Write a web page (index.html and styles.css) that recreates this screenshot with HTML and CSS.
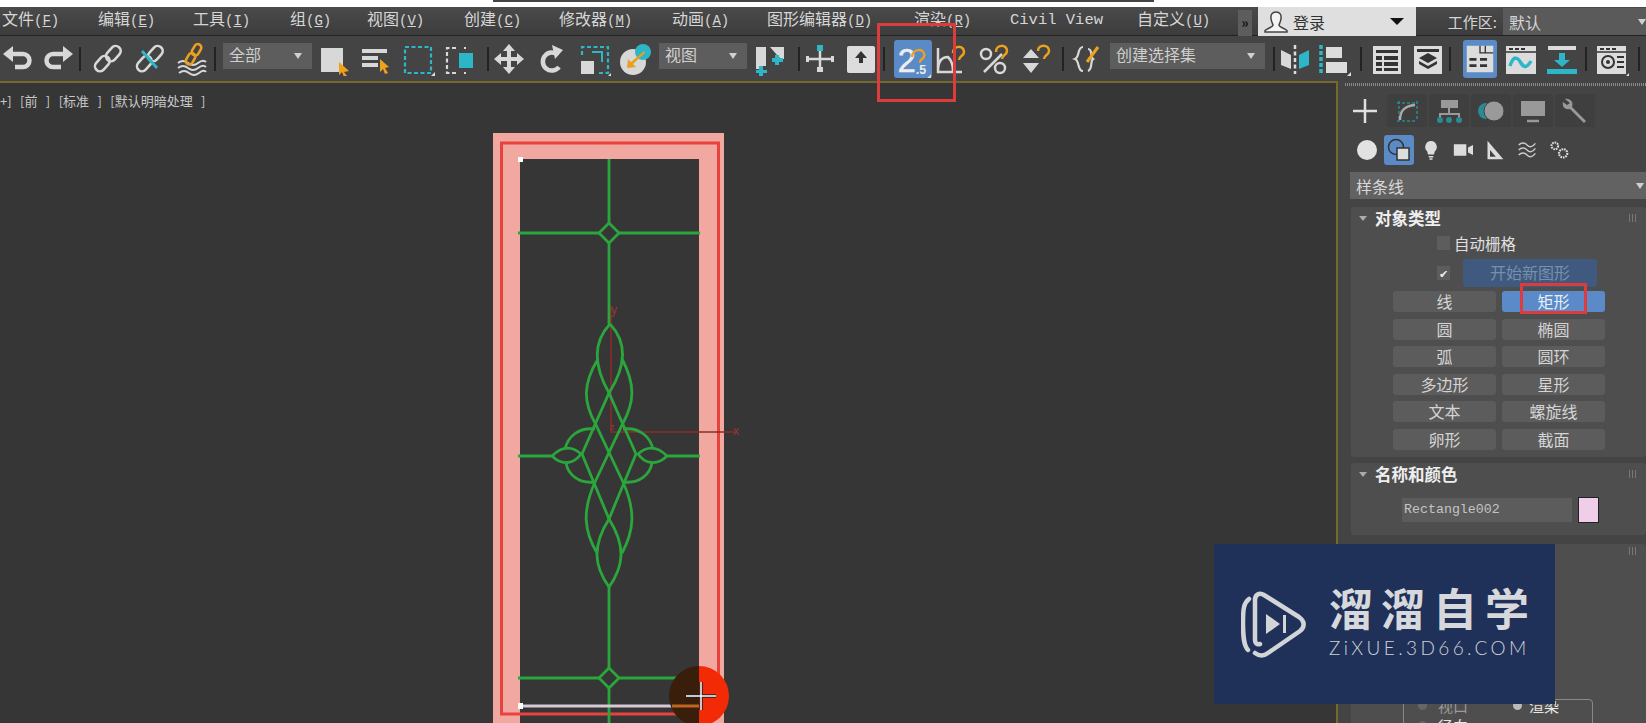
FILE: index.html
```html
<!DOCTYPE html>
<html lang="zh-CN">
<head>
<meta charset="utf-8">
<title>3ds Max</title>
<link rel="stylesheet" href="styles.css">
</head>
<body>
<div class="strip"><div class="strip-dark"></div></div>
<nav class="menu">
  <span>文件<i>(<u>F</u>)</i></span><span>编辑<i>(<u>E</u>)</i></span><span>工具<i>(<u>I</u>)</i></span><span>组<i>(<u>G</u>)</i></span><span>视图<i>(<u>V</u>)</i></span><span>创建<i>(<u>C</u>)</i></span><span>修改器<i>(<u>M</u>)</i></span><span>动画<i>(<u>A</u>)</i></span><span>图形编辑器<i>(<u>D</u>)</i></span><span>渲染<i>(<u>R</u>)</i></span><span class="civil">Civil View</span><span>自定义<i>(<u>U</u>)</i></span>
  <b class="more">»</b>
  <div class="login">
    <svg class="user" viewBox="0 0 26 24"><path d="M13 2c-4 0-5.500 3-5 6.500.3 3 1.500 5 2 6.500 0 2-5 3-8 5.500v1.500h22V20.500c-3-2.500-8-3.500-8-5.500.5-1.500 1.700-3.500 2-6.500C18.500 5 17 2 13 2z" fill="#f4f4f4" stroke="#444" stroke-width="1.500"/></svg>
    <span>登录</span><em class="tri-black"></em>
  </div>
  <div class="ws-label">工作区:</div>
  <div class="ws-value">默认<em class="tri-small"></em></div>
</nav>
<div class="tools">
  <svg class="ic first" viewBox="0 0 34 34"><path d="M10 12h12a6.500 6.500 0 0 1 0 13h-8" fill="none" stroke="#d8d8d8" stroke-width="4.500"/><path d="M12 4L2 12l10 8z" fill="#d8d8d8"/></svg>
  <svg class="ic ml6" viewBox="0 0 34 34"><path d="M24 12H12a6.500 6.500 0 0 0 0 13h8" fill="none" stroke="#d8d8d8" stroke-width="4.500"/><path d="M22 4l10 8-10 8z" fill="#d8d8d8"/></svg>
  <span class="sep ml4"></span>
  <svg class="ic ml10" viewBox="0 0 34 34"><g fill="none" stroke="#d8d8d8" stroke-width="2.600"><rect x="3" y="17" width="17" height="10" rx="5" transform="rotate(-48 11 22)"/><rect x="14" y="7" width="17" height="10" rx="5" transform="rotate(-48 22 12)"/></g></svg>
  <svg class="ic ml8" viewBox="0 0 34 34"><g fill="none" stroke="#d8d8d8" stroke-width="2.600"><rect x="3" y="17" width="17" height="10" rx="5" transform="rotate(-48 11 22)"/><rect x="14" y="7" width="17" height="10" rx="5" transform="rotate(-48 22 12)"/></g><path d="M9 9l15 17" stroke="#2db5c8" stroke-width="3"/></svg>
  <svg class="ic ml8" viewBox="0 0 34 34"><path d="M3 21q5-4 10 0t10 0 8-1M3 26q5-4 10 0t10 0 8-1M4 31q5-4 10 0t10 0 7-1" fill="none" stroke="#d8d8d8" stroke-width="2"/><g fill="none" stroke="#e8a020" stroke-width="2.600"><rect x="10" y="13" width="12" height="7" rx="3.500" transform="rotate(-60 16 17)"/><rect x="16" y="4" width="12" height="7" rx="3.500" transform="rotate(-60 22 8)"/></g></svg>
  <span class="sep ml5"></span>
  <div class="combo ml7 w89"><span>全部</span><em class="tri-small"></em></div>
  <svg class="ic ml5" viewBox="0 0 34 34"><rect x="4" y="6" width="22" height="24" fill="#d8d8d8"/><path d="M22 20l10 9-5 1 3 4-3 1-2-5-3 3z" fill="#eea11c"/></svg>
  <svg class="ic ml7" viewBox="0 0 34 34"><path d="M4 7h25v4H4zM4 14h16v4H4zM4 21h16v4H4z" fill="#d8d8d8"/><path d="M22 17l9 8-4 1 3 5-3 1-2-5-3 3z" fill="#eea11c"/></svg>
  <svg class="ic ml9" viewBox="0 0 34 34"><rect x="4" y="5" width="26" height="26" fill="none" stroke="#2db5c8" stroke-width="2.200" stroke-dasharray="4 2.500"/><path d="M34 34h-4l4-4z" fill="#ddd"/></svg>
  <svg class="ic ml7" viewBox="0 0 34 34"><path d="M14 6H5v25h9M22 6h2M22 31h2" fill="none" stroke="#d8d8d8" stroke-width="2.200" stroke-dasharray="4 2.500"/><rect x="17" y="11" width="14" height="15" fill="#2db5c8"/></svg>
  <span class="sep ml11"></span>
  <svg class="ic ml3" viewBox="0 0 34 34"><path d="M17 2l6 7h-4v6h6v-4l7 6-7 6v-4h-6v6h4l-6 7-6-7h4v-6H9v4l-7-6 7-6v4h6V9h-4z" fill="#d8d8d8"/></svg>
  <svg class="ic ml9" viewBox="0 0 34 34"><path d="M23 13a9 9 0 1 0 1 12" fill="none" stroke="#d8d8d8" stroke-width="4.500"/><path d="M17 3l11 5-8 9z" fill="#d8d8d8"/></svg>
  <svg class="ic ml8" viewBox="0 0 34 34"><path d="M5 13V5h26v26h-9" fill="none" stroke="#2db5c8" stroke-width="2.200" stroke-dasharray="4 2.500"/><path d="M15 10h10v10" fill="none" stroke="#2db5c8" stroke-width="2"/><rect x="4" y="19" width="13" height="13" fill="#d8d8d8"/><path d="M34 34h-3l3-3z" fill="#ddd"/></svg>
  <svg class="ic ml7" viewBox="0 0 34 34"><circle cx="15" cy="20" r="13" fill="#d8d8d8"/><circle cx="25" cy="10" r="8" fill="#2db5c8"/><path d="M26 9L13 20l-3-3-1 9 9-1-3-3 12-11z" fill="#e8a020"/></svg>
  <div class="combo ml7 w88"><span>视图</span><em class="tri-small"></em></div>
  <svg class="ic ml7" viewBox="0 0 34 34"><path d="M2 5h10v19H6v3H2zM16 5h14v12h-3l-4-4z" fill="#d8d8d8"/><path d="M5 24h4v4h4v3H9v3H5v-3H2v-3h3zM21 13h4v3h4v4h-4v3h-4v-3h-3v-4h3z" fill="#2db5c8"/></svg>
  <span class="sep ml10"></span>
  <svg class="ic ml3" viewBox="0 0 34 34"><path d="M3 17h28M17 8v20" stroke="#d8d8d8" stroke-width="2.500"/><path d="M3 14h3v6H3zM28 14h3v6h-3zM14 25h6v5h-6z" fill="#d8d8d8"/><rect x="14" y="3" width="6" height="6" fill="#2db5c8"/></svg>
  <svg class="ic ml7" viewBox="0 0 34 34"><rect x="3" y="4" width="28" height="27" rx="2" fill="#dcdcdc"/><path d="M17 9l6 7h-4v5h-4v-5h-4z" fill="#333"/></svg>
  <span class="sep ml5"></span>
  <div class="snap ml9">
    <svg viewBox="0 0 38 40"><text x="3" y="34" class="snap-two">2</text><text x="22" y="36" class="snap-five">.5</text><path d="M18 18c0-9 13-10 13-2 0 4-5 4-5 8" fill="none" stroke="#eea11c" stroke-width="2.500"/><path d="M38 40h-4l4-4z" fill="#ddd"/></svg>
  </div>
  <svg class="ic ml3" viewBox="0 0 34 34"><path d="M3 6v24h24M3 29c0-10 4-14 10-14 3 3 5 8 5 14" fill="none" stroke="#d8d8d8" stroke-width="2.500"/><path d="M18 11c0-8 11-8 11-1 0 4-5 4-5 8" fill="none" stroke="#eea11c" stroke-width="2.500"/></svg>
  <svg class="ic ml9" viewBox="0 0 34 34"><circle cx="8" cy="12" r="5" fill="none" stroke="#d8d8d8" stroke-width="2.500"/><circle cx="22" cy="26" r="5" fill="none" stroke="#d8d8d8" stroke-width="2.500"/><path d="M6 30L24 12" stroke="#d8d8d8" stroke-width="2.500"/><path d="M18 10c0-8 11-8 11-1 0 4-5 4-5 8" fill="none" stroke="#eea11c" stroke-width="2.500"/></svg>
  <svg class="ic ml8" viewBox="0 0 34 34"><path d="M11 7l8 9H3zM11 31l8-10H3z" fill="#d8d8d8"/><path d="M18 9c0-7 11-7 11 0 0 4-5 4-5 8" fill="none" stroke="#eea11c" stroke-width="2.500"/></svg>
  <span class="sep ml8"></span>
  <svg class="ic ml7" viewBox="0 0 34 34"><path d="M12 5C6 5 9 15 4 17c5 2 2 12 8 12" fill="none" stroke="#d8d8d8" stroke-width="2.200"/><path d="M17 7c5 0 2 8 5 10-3 2 0 10-5 12" fill="none" stroke="#d8d8d8" stroke-width="2.200"/><path d="M16 20L27 5" stroke="#eea11c" stroke-width="3"/></svg>
  <div class="combo ml5 w155"><span>创建选择集</span><em class="tri-small"></em></div>
  <span class="sep ml8"></span>
  <svg class="ic ml3" viewBox="0 0 34 34"><path d="M3 8l10 5v14L3 23z" fill="#d8d8d8"/><path d="M31 8l-10 5v14l10-4z" fill="#2db5c8"/><path d="M17 3v29" stroke="#ddd" stroke-width="2.500" stroke-dasharray="4 2.500"/></svg>
  <svg class="ic ml5" viewBox="0 0 34 34"><path d="M4 3v30" stroke="#2db5c8" stroke-width="3.500" stroke-dasharray="4 2"/><path d="M9 5h16v11H9zM9 20h21v11H9z" fill="#dcdcdc"/><path d="M34 34h-4l4-4z" fill="#ddd"/></svg>
  <span class="sep ml9"></span>
  <svg class="ic ml8" viewBox="0 0 34 34"><rect x="3" y="4" width="28" height="28" fill="#dcdcdc"/><path d="M6 8h22v3H6zM6 14h6v4H6zM14 14h14v4H14zM6 20h6v4H6zM14 20h14v4H14zM6 26h6v3H6zM14 26h14v3H14z" fill="#333"/></svg>
  <svg class="ic ml7" viewBox="0 0 34 34"><rect x="3" y="4" width="28" height="28" fill="#dcdcdc"/><path d="M6 7h22v3H6zM17 11l9 5-9 5-9-5z" fill="#333"/><path d="M8 19l9 5 9-5v3l-9 5-9-5z" fill="#333"/></svg>
  <span class="sep ml4"></span>
  <div class="active-ic ml12"><svg viewBox="0 0 34 34"><rect x="2" y="2" width="30" height="30" fill="#dcdcdc"/><path d="M5 16h8v3H5zM17 16h8v3h-8zM5 23h8v3H5zM17 23h8v3h-8z" fill="#333"/><path d="M17 2v8h15M23 2v8" fill="none" stroke="#333" stroke-width="1.500"/></svg></div>
  <svg class="ic ml7" viewBox="0 0 34 34"><rect x="2" y="4" width="30" height="28" fill="#dcdcdc"/><path d="M2 10h30" stroke="#333" stroke-width="1.500"/><path d="M5 6h4v2H5zM11 6h4v2h-4zM17 6h4v2h-4z" fill="#333"/><path d="M6 24c4-12 8-8 11-3s6 5 10-2" fill="none" stroke="#2db5c8" stroke-width="3.500"/></svg>
  <svg class="ic ml7" viewBox="0 0 34 34"><path d="M3 4h28v4H3z" fill="#dcdcdc"/><path d="M14 11h6v7h5l-8 7-8-7h5z" fill="#2db5c8"/><path d="M2 27h30v5H2z" fill="#2db5c8"/></svg>
  <span class="sep ml6"></span>
  <svg class="ic ml8" viewBox="0 0 34 34"><rect x="2" y="4" width="29" height="28" fill="#dcdcdc"/><path d="M2 10h29" stroke="#333" stroke-width="1.500"/><path d="M5 6h4v2H5zM11 6h4v2h-4zM17 6h4v2h-4zM22 14h7v2h-7zM22 19h7v2h-7zM22 24h7v2h-7z" fill="#333"/><circle cx="13" cy="20" r="6" fill="none" stroke="#333" stroke-width="2"/><circle cx="13" cy="20" r="2" fill="#333"/><path d="M34 34h-3l3-3z" fill="#ddd"/></svg>
  <span class="sep ml9"></span>
</div>
<main class="main">
  <section class="viewport">
    <div class="vp-label">+] [前 ] [标准 ] [默认明暗处理 ]</div>
    <svg class="scene" viewBox="0 80 1336 643">
      <rect x="493" y="132" width="231" height="600" fill="#f0a8a0"/>
      <rect x="520" y="158" width="179" height="570" fill="#363636"/>
      <rect x="501.500" y="142" width="217" height="571" fill="none" stroke="#e8423e" stroke-width="3"/>
      <g fill="none" stroke="#8f2a2a" stroke-width="1.500">
        <path d="M611 305v126h124"/>
      </g>
      <text x="611" y="313" class="axis">y</text>
      <text x="733" y="434" class="axis">x</text>
      <text x="610" y="429" class="axis small">z</text>
      <g fill="none" stroke="#2ba63c" stroke-width="2.800">
        <path d="M609 158V222M609 242V323M609 586V667M609 687V723"/>
        <path d="M518 232H599M619 232H700M518 455H552M667 455H700M518 677H599M619 677H680"/>
        <path d="M609 222l10 10-10 10-10-10zM609 667l10 10-10 10-10-10z"/>
        <path d="M610 323C594 340 592 362 609 392L636 453"/>
        <path d="M610 323C626 340 628 362 609 392L582 453"/>
        <path d="M598 358C582 384 584 402 595 422L623 481C636 510 634 530 622 552"/>
        <path d="M622 358C636 384 634 402 623 422L595 481C582 510 584 530 597 552"/>
        <path d="M582 453L609 518C626 545 624 565 609 586"/>
        <path d="M636 453L609 518C592 545 594 565 609 586"/>
        <path d="M552 455C562 445 572 445 581 453C574 463 562 465 552 455z"/>
        <path d="M667 455C657 445 647 445 638 453C645 463 657 465 667 455z"/>
        <path d="M595 428C578 426 568 436 565 448M595 481C578 483 568 473 566 462"/>
        <path d="M623 428C640 426 650 436 653 448M623 481C640 483 650 473 652 462"/>
      </g>
      <path d="M520 705H672" stroke="#d8c8d8" stroke-width="3"/>
      <rect x="518" y="156" width="5" height="5" fill="#fff"/>
      <rect x="518" y="702" width="5" height="6" fill="#fff"/>
      <path d="M699 665A30 30 0 0 0 699 725z" fill="#3a1e0c"/>
      <path d="M699 665A30 30 0 0 1 699 725z" fill="#f32a06"/>
      <path d="M672 705H699" stroke="#c0651e" stroke-width="3"/>
      <path d="M686 695H716M701 681V709" stroke="#222" stroke-width="3.500"/>
      <path d="M686 695H716M701 681V709" stroke="#fff" stroke-width="1.500"/>
    </svg>
  </section>
  <aside class="panel">
    <div class="dots"></div>
    <div class="tabs">
      <div class="tab tab-on"><svg viewBox="0 0 30 30"><path d="M15 3v24M3 15h24" stroke="#e0e0e0" stroke-width="2.500"/></svg></div>
      <div class="tab"><svg viewBox="0 0 30 30"><path d="M5 7h20M5 25h20M7 5v20M25 5v20" stroke="#2b8a92" stroke-width="1.500" stroke-dasharray="3 2"/><path d="M8 24C8 14 13 10 23 9" fill="none" stroke="#aaa" stroke-width="2.500"/></svg></div>
      <div class="tab"><svg viewBox="0 0 30 30"><rect x="7" y="4" width="17" height="8" fill="#999"/><path d="M15 12v5M6 23v-5h19v5" fill="none" stroke="#999" stroke-width="2"/><circle cx="6" cy="24" r="3" fill="#2b8a92"/><circle cx="15" cy="24" r="3" fill="#2b8a92"/><circle cx="25" cy="24" r="3" fill="#2b8a92"/></svg></div>
      <div class="tab"><svg viewBox="0 0 30 30"><circle cx="10" cy="15" r="8" fill="#2b8a92"/><circle cx="18" cy="15" r="10" fill="#9a9a9a" stroke="#444"/></svg></div>
      <div class="tab"><svg viewBox="0 0 30 30"><rect x="3" y="5" width="24" height="15" fill="#999"/><path d="M9 25h12" stroke="#999" stroke-width="2.500"/></svg></div>
      <div class="tab"><svg viewBox="0 0 30 30"><path d="M5 3c5-1 9 3 7 8l14 14-2 2L10 13c-5 1-8-2-7-7l4 3 3-2z" fill="#999"/></svg></div>
    </div>
    <div class="subtabs">
      <svg class="sub" viewBox="0 0 30 30"><circle cx="15" cy="15" r="10" fill="#e2e2e2"/></svg>
      <div class="sub sub-on"><svg viewBox="0 0 30 30"><circle cx="12" cy="12" r="7.500" fill="none" stroke="#333" stroke-width="1.500"/><rect x="13" y="13" width="12" height="12" fill="#ddd" stroke="#333" stroke-width="1.500"/></svg></div>
      <svg class="sub" viewBox="-5 -5 40 40"><path d="M15 3a8 8 0 0 1 5 14l-1 4h-8l-1-4A8 8 0 0 1 15 3zM12 23h6v2h-6zM13 26h4v2h-4z" fill="#dcdcdc"/></svg>
      <svg class="sub" viewBox="-3 -3 36 36"><path d="M4 8h15v14H4zM21 12l6-3v12l-6-3z" fill="#dcdcdc"/></svg>
      <svg class="sub" viewBox="-3 -3 36 36"><path d="M6 4l19 22H6z" fill="#dcdcdc"/><path d="M9 15l7 8H9z" fill="#444"/></svg>
      <svg class="sub" viewBox="-3 -3 36 36"><path d="M5 9q5-5 10 0t10-2M5 15q5-5 10 0t10-2M5 21q5-5 10 0t10-2" fill="none" stroke="#ccc" stroke-width="1.700"/></svg>
      <svg class="sub" viewBox="-3 -3 36 36"><circle cx="10" cy="10" r="4" fill="none" stroke="#ddd" stroke-width="2.500" stroke-dasharray="2 1"/><circle cx="20" cy="19" r="5" fill="none" stroke="#ddd" stroke-width="2.500" stroke-dasharray="2 1"/></svg>
    </div>
    <div class="dd">样条线<em class="tri-small"></em></div>

    <section class="roll roll-type">
      <header class="roll-head"><em class="tri-head"></em><strong>对象类型</strong><span class="grip"></span></header>
      <div class="check-row"><span class="check"></span><span>自动栅格</span></div>
      <div class="new-row"><span class="check on">✔</span><div class="new-btn">开始新图形</div></div>
      <div class="btns">
        <div class="btn">线</div><div class="btn btn-on">矩形</div>
        <div class="btn">圆</div><div class="btn">椭圆</div>
        <div class="btn">弧</div><div class="btn">圆环</div>
        <div class="btn">多边形</div><div class="btn">星形</div>
        <div class="btn">文本</div><div class="btn">螺旋线</div>
        <div class="btn">卵形</div><div class="btn">截面</div>
      </div>
      <div class="note note-btn"></div>
    </section>

    <section class="roll roll-name">
      <header class="roll-head"><em class="tri-head"></em><strong>名称和颜色</strong><span class="grip"></span></header>
      <div class="name-row"><div class="name-input">Rectangle002</div><div class="swatch"></div></div>
    </section>

    <section class="roll roll-render">
      <span class="grip grip-float"></span>
      <div class="group">
        <div class="opt"><span class="radio"></span><span class="dim">视口</span><span class="radio radio-b"></span><span>渲染</span></div>
        <div class="opt"><span class="radio"></span><span>径向</span></div>
      </div>
    </section>
  </aside>
  <div class="note note-top"></div>
  <div class="mark">
    <svg class="mark-logo" viewBox="0 0 66 68"><path d="M8 9C3 13 2 18 2 32c0 16 1 24 5 28" fill="none" stroke="#d2d4d8" stroke-width="4.500" stroke-linecap="round"/><path d="M19 54c-3 1-5-1-5-4V10c0-5 4-8 9-5l35 22c6 4 6 10 1 14L27 63c-4 3-9 3-13 0" fill="none" stroke="#d2d4d8" stroke-width="4.500" stroke-linecap="round"/><path d="M25 24l14 10-14 10z" fill="#d2d4d8"/><path d="M42 25h3v18h-3z" fill="#d2d4d8"/></svg>
    <div class="mark-text">
      <div class="mark-cn">溜溜自学</div>
      <div class="mark-en">ZiXUE.3D66.COM</div>
    </div>
  </div>
</main>
</body>
</html>
```

FILE: styles.css
```css
* { box-sizing: border-box; }
html, body { margin: 0; padding: 0; }
body {
  width: 1646px;
  height: 723px;
  overflow: hidden;
  background: #444;
  color: #d6d6d6;
  font-family: "Noto Sans CJK SC", "Liberation Sans", sans-serif;
  font-size: 14px;
}
em { font-style: normal; }

.strip { height: 7px; background: #fff; padding-left: 493px; }
.strip-dark { width: 661px; height: 2px; background: #444; }

.menu {
  height: 29px;
  display: grid;
  grid-template-columns: 96px 95px 97px 77px 97px 95px 113px 95px 147px 96px 127px 101px 20px 158px 87px 143px;
  padding-left: 2px;
  align-items: center;
  background: linear-gradient(#4a4a4a, #3c3c3c);
  border-bottom: 1px solid #222;
  font-size: 16px;
  line-height: 24px;
  white-space: nowrap;
}
.menu > span { margin-top: -4px; }
.menu i { font-family: "Liberation Mono", monospace; font-style: normal; font-size: 14px; }
.menu > .civil { font-family: "Liberation Mono", monospace; font-size: 15.500px; }
.more {
  height: 26px; margin-top: 2px; width: 14px;
  background: #5d5d5d; color: #111; font-size: 14px; text-align: center; line-height: 24px;
}
.login {
  height: 29px;
  background: #dfdfdf;
  color: #333;
  display: flex;
  align-items: center;
  padding: 0 12px 0 5px;
  font-size: 16px;
}
.user { width: 26px; height: 24px; margin-right: 4px; }
.login span { flex: 1; }
.tri-black { border-left: 7px solid transparent; border-right: 7px solid transparent; border-top: 7px solid #111; }
.ws-label { text-align: right; padding-right: 6px; font-size: 15px; }
.ws-value {
  height: 27px; background: #5a5a5a; display: flex; align-items: center; justify-content: space-between;
  padding: 0 0 0 6px; font-size: 16px;
}
.tri-small { display: block; border-left: 4px solid transparent; border-right: 4px solid transparent; border-top: 6px solid #d0d0d0; }

.tools { height: 45px; display: flex; align-items: center; background: #444; padding-top: 1px; }
.ic { width: 34px; height: 34px; flex: none; }
.ic.first { margin-left: 1px; }
.sep { width: 2px; height: 24px; background: #222; flex: none; }
.ml3 { margin-left: 3px; } .ml4 { margin-left: 4px; } .ml5 { margin-left: 5px; } .ml6 { margin-left: 6px; }
.ml7 { margin-left: 7px; } .ml8 { margin-left: 8px; } .ml9 { margin-left: 9px; } .ml10 { margin-left: 10px; }
.ml11 { margin-left: 11px; } .ml12 { margin-left: 12px; }
.combo {
  height: 26px; margin-top: -7px; background: #5d5d5d; flex: none;
  display: flex; align-items: center; justify-content: space-between;
  padding: 0 10px 0 6px; font-size: 16px; color: #cfcfcf;
}
.combo span { margin-top: -3px; }
.w89 { width: 89px; } .w88 { width: 88px; } .w155 { width: 155px; }
.snap { width: 38px; height: 38px; background: #5a8bc6; border-radius: 3px; flex: none; }
.snap svg, .active-ic svg { display: block; width: 100%; height: 100%; }
.snap-two { font: 400 34px "Liberation Sans", sans-serif; fill: #eee; stroke: #eee; stroke-width: .6px; }
.snap-five { font: 700 13px "Liberation Sans", sans-serif; fill: #eee; }
.active-ic { width: 34px; height: 38px; padding: 3px 2px; background: #5a8bc6; border-radius: 3px; flex: none; }

.main { position: relative; height: 642px; display: flex; }
.viewport {
  position: relative;
  width: 1338px;
  height: 642px;
  background: #363636;
  border-top: 2px solid #756a2c;
  border-right: 2px solid #756a2c;
  flex: none;
  overflow: hidden;
}
.vp-label { position: absolute; left: 0; top: 8px; font-size: 13px; word-spacing: 5.500px; color: #c8c8c8; white-space: nowrap; }
.scene { position: absolute; left: 0; top: -2px; width: 1336px; height: 643px; }
.axis { font: 12px "Liberation Sans", sans-serif; fill: #a03434; }
.axis.small { font-size: 9px; }
.note { position: absolute; border: 3px solid #dc3c3c; }
.note-top { left: 877px; top: -58px; width: 79px; height: 79px; }

.panel { width: 301px; margin-left: 7px; height: 642px; overflow: hidden; flex: none; position: relative; }
.dots { height: 3px; margin-top: 2px; background: repeating-linear-gradient(90deg, #8a8a8a 0 1px, #444 1px 2px); }
.tabs { display: flex; gap: 2px; margin-top: 8px; height: 33px; }
.tab { width: 40px; height: 33px; background: #3f3f3f; display: flex; align-items: center; justify-content: center; border-radius: 3px 3px 0 0; }
.tab-on { background: #444; }
.tab svg { width: 30px; height: 30px; }
.subtabs { display: flex; align-items: center; height: 30px; margin-top: 8px; padding-left: 7px; gap: 2px; }
.sub { width: 30px; height: 30px; flex: none; }
.sub-on { background: #5a8bc6; border-radius: 3px; }
.sub-on svg { display: block; width: 100%; height: 100%; }
.dd {
  margin: 7px 0 0 5px; height: 27px; background: #626262;
  display: flex; align-items: center; justify-content: space-between;
  padding: 0 2px 0 6px; font-size: 16px; color: #d8d8d8;
}
.roll { position: relative; margin: 8px 0 0 6px; background: #4e4e4e; border-radius: 3px; }
.roll-type { height: 250px; }
.roll-head { height: 26px; display: flex; align-items: center; padding: 0 0 4px 8px; color: #eee; font-size: 16.500px; }
.roll-head strong { font-weight: 700; margin-left: 8px; }
.tri-head { display: block; border-left: 4px solid transparent; border-right: 4px solid transparent; border-top: 5px solid #aaa; }
.grip {
  width: 8px; height: 8px; margin-left: auto; margin-right: 9px;
  background: repeating-linear-gradient(90deg, #777 0 1px, transparent 1px 3px);
}
.grip-float { position: absolute; right: 0; top: 3px; }
.check-row { display: flex; align-items: center; margin: 2px 0 0 86px; height: 16px; gap: 4px; font-size: 15.500px; color: #e0e0e0; }
.check { width: 13px; height: 14px; background: #5d5d5d; flex: none; font-size: 11px; line-height: 14px; text-align: center; color: #eee; }
.new-row { display: flex; align-items: center; margin: 8px 0 0 86px; height: 28px; gap: 13px; }
.new-btn {
  width: 134px; height: 28px; background: #3f5a7e; color: #7790ae; border-radius: 3px;
  text-align: center; line-height: 27px; font-size: 16px;
}
.btns {
  display: grid; grid-template-columns: 103px 103px; grid-auto-rows: 21px;
  column-gap: 6px; row-gap: 6.600px; margin: 4px 0 0 42px;
}
.btn { background: #5c5c5c; border-radius: 3px; text-align: center; line-height: 20px; font-size: 16px; color: #d4d4d4; }
.btn-on { background: #5a8bc8; color: #e8eef6; }
.note-btn { left: 169px; top: 76px; width: 67px; height: 31px; }
.roll-name { height: 72px; margin-top: 6px; }
.name-row { display: flex; align-items: center; gap: 6px; margin: 8px 0 0 51px; }
.name-input {
  width: 170px; height: 24px; background: #5c5c5c; padding-left: 2px;
  font: 13.300px/23px "Liberation Mono", monospace; color: #c4c4c4;
}
.swatch { width: 21px; height: 26px; background: #f0cde8; border: 1px solid #222; }
.roll-render { height: 200px; margin-top: 9px; padding: 155px 0 0 52px; }
.group { width: 190px; border: 1px solid #888; border-radius: 4px; height: 60px; padding: 0 0 0 14px; font-size: 15px; color: #e8e8e8; }
.opt { display: flex; align-items: center; height: 17px; margin-top: -3px; margin-bottom: 6px; }
.radio { width: 9px; height: 9px; border-radius: 50%; background: #666; margin-right: 11px; flex: none; }
.radio-b { margin-left: 45px; background: #bbb; margin-right: 7px; }
.dim { color: #999; }

.mark {
  position: absolute;
  left: 1214px; top: 463px;
  width: 341px; height: 160px;
  background: #1f3059;
  display: flex; align-items: center;
  padding: 0 0 0 27px;
  gap: 22px;
}
.mark-logo { width: 66px; height: 68px; flex: none; }
.mark-cn { font-size: 44px; font-weight: 700; color: #d6d8dc; letter-spacing: 8px; line-height: 50px; white-space: nowrap; margin-top: -8px; }
.mark-en { font: 300 19px/20px "Lato", sans-serif; color: #cfd2d8; letter-spacing: 3.400px; white-space: nowrap; margin-top: 6px; }
```
